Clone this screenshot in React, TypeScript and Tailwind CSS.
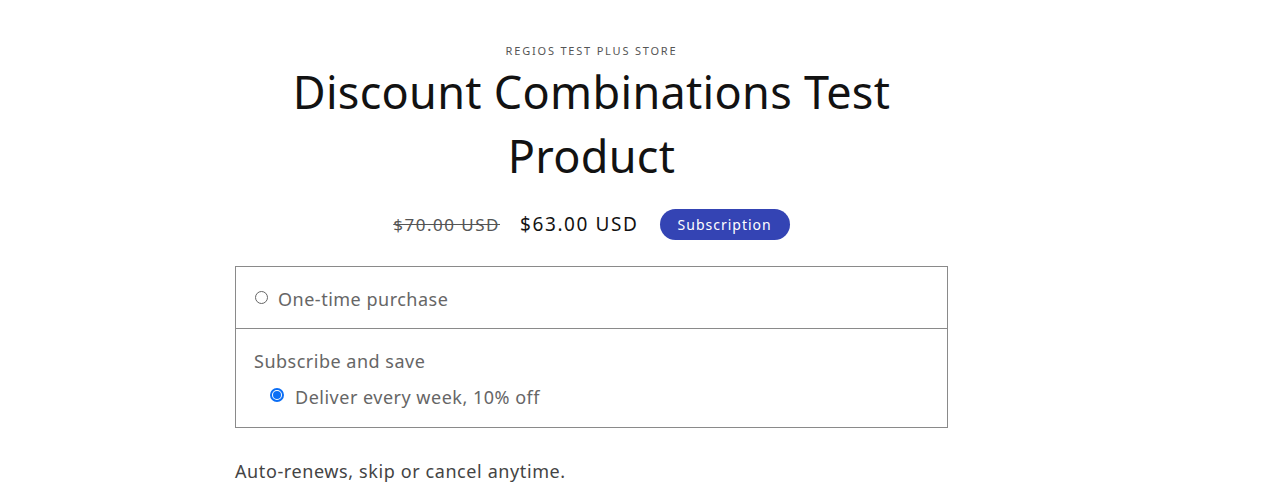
import React from "react";

export default function App() {
  return (
    <div className="w-[1283px] h-[491px] bg-white overflow-hidden" style={{ fontFamily: '"Noto Sans", sans-serif' }}>
      <div className="ml-[235px] w-[713px] pt-[43px]">
        <div className="text-center text-[11px] leading-[16px] tracking-[1.8px] text-[#555]">REGIOS TEST PLUS STORE</div>
        <h1 className="mt-[1px] text-center text-[45px] leading-[64px] text-[#121212] tracking-[0.3px]">
          Discount Combinations Test
          <br />
          Product
        </h1>
        <div className="mt-[21px] flex items-center justify-center">
          <span className="text-[17px] tracking-[1.5px] text-[#555] line-through mr-[20px]">$70.00 USD</span>
          <span className="text-[19px] tracking-[1.6px] text-[#121212] mr-[21px]">$63.00 USD</span>
          <span className="h-[31px] px-[18px] rounded-full bg-[#3444b4] text-white text-[14px] tracking-[1px] flex items-center">Subscription</span>
        </div>
        <div className="mt-[26px] border border-[#8a8a8a]">
          <div className="h-[62px] flex items-center pl-[19px] border-b border-[#8a8a8a]">
            <span className="w-[13px] h-[13px] rounded-full border border-[#666] mr-[10px] -mt-[1px]"></span>
            <span className="text-[18px] leading-[28px] pt-[2px] text-[#666] tracking-[0.5px]">One-time purchase</span>
          </div>
          <div className="pl-[18px] pt-[18px] pb-[16px]">
            <div className="text-[18px] leading-[28px] text-[#666] tracking-[0.5px]">Subscribe and save</div>
            <div className="mt-[8px] flex items-center pl-[16px]">
              <span className="w-[14px] h-[14px] rounded-full border-[2px] border-[#0b6ef5] mr-[11px] -mt-[4px] flex items-center justify-center">
                <span className="w-[8px] h-[8px] rounded-full bg-[#0b6ef5]"></span>
              </span>
              <span className="text-[18px] leading-[28px] text-[#666] tracking-[0.5px]">Deliver every week, 10% off</span>
            </div>
          </div>
        </div>
        <div className="mt-[29px] text-[18px] leading-[28px] text-[#444] tracking-[0.6px]">Auto-renews, skip or cancel anytime.</div>
      </div>
    </div>
  );
}
